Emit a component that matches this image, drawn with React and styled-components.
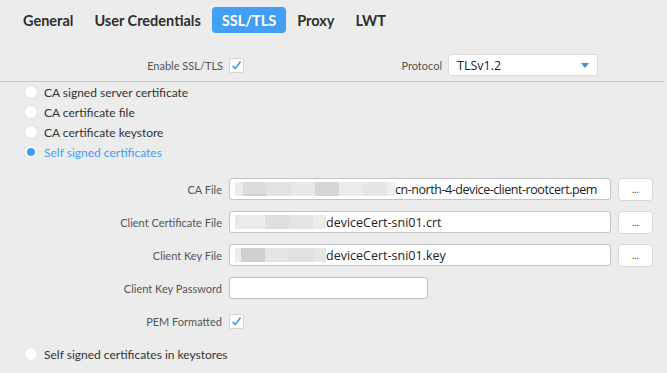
import React from 'react'
import styled, { createGlobalStyle } from 'styled-components'

const GlobalStyle = createGlobalStyle`
  html, body {
    margin: 0;
    padding: 0;
    background: #ececec;
    font-family: Lato, "Open Sans", sans-serif;
  }
`

const Page = styled.div`
  width: 667px;
  height: 373px;
  padding-top: 7px;
  box-sizing: border-box;
  overflow: hidden;
`

const TabBar = styled.div`
  display: flex;
  gap: 1px;
  padding-left: 13px;
  height: 26px;
`

const Tab = styled.div`
  display: flex;
  align-items: center;
  padding: 0 10px;
  border-radius: 4px;
  font-size: 14.5px;
  font-weight: bold;
  color: ${p => (p.active ? '#fff' : '#2e2e2e')};
  background: ${p => (p.active ? '#429ef6' : 'transparent')};
`

const TopRow = styled.div`
  display: grid;
  grid-template-columns: 223px 1fr auto 150px;
  column-gap: 6px;
  align-items: center;
  height: 22px;
  margin-top: 21px;
  padding-right: 69px;
`

const Label = styled.div`
  font-size: 11px;
  color: #555;
  text-align: right;
  white-space: nowrap;
`

const CheckBox = styled.div`
  width: 13px;
  height: 13px;
  background: #fff;
  border: 1px solid #d6d6d6;
  border-radius: 2px;
  display: flex;
  align-items: center;
  justify-content: center;
`

const Select = styled.div`
  height: 22px;
  box-sizing: border-box;
  background: #fff;
  border: 1px solid #dcdcdc;
  border-radius: 3px;
  display: flex;
  align-items: center;
  justify-content: space-between;
  padding: 0 8px 0 8px;
  font-size: 12.5px;
  color: #222;
  font-family: "Open Sans", sans-serif;
`

const Caret = styled.div`
  width: 0;
  height: 0;
  border-left: 4px solid transparent;
  border-right: 4px solid transparent;
  border-top: 5px solid #3d92e0;
`

const Separator = styled.div`
  width: 664px;
  height: 1px;
  background: #c9c9c9;
  margin-top: 5px;
`

const RadioRow = styled.div`
  display: flex;
  align-items: center;
  gap: 7px;
  height: 20px;
  padding-left: 25px;
  margin-top: ${p => p.mt || 0}px;
  font-size: 12px;
  color: ${p => (p.checked ? '#3f9cf3' : '#333')};
`

const RadioDot = styled.div`
  width: 12px;
  height: 12px;
  border-radius: 50%;
  background: #fff;
  box-shadow: 0 0 0 1px #e2e2e2;
  display: flex;
  align-items: center;
  justify-content: center;
  &::after {
    content: '';
    display: ${p => (p.checked ? 'block' : 'none')};
    width: 8px;
    height: 8px;
    border-radius: 50%;
    background: #3f9cf3;
  }
`

const Form = styled.div`
  display: grid;
  grid-template-columns: 222px auto;
  column-gap: 7px;
  row-gap: 11px;
  align-items: center;
  margin-top: 16px;
`

const FieldRow = styled.div`
  display: flex;
  align-items: center;
  gap: 7px;
  height: 22px;
`

const Input = styled.div`
  width: ${p => p.w}px;
  height: 22px;
  box-sizing: border-box;
  background: #fff;
  border: 1px solid #c4c4c4;
  border-radius: 3px;
  display: flex;
  align-items: center;
  padding-left: 5px;
  font-size: 12.5px;
  color: #222;
  font-family: "Open Sans", sans-serif;
  white-space: nowrap;
  overflow: hidden;
`

const FileName = styled.span`
  letter-spacing: ${p => p.spacing || 0}px;
`

const Redacted = styled.div`
  display: flex;
  height: 14px;
  flex-shrink: 0;
`

const Block = styled.div`
  height: 100%;
  width: ${p => p.w}px;
  background: ${p => p.c};
  box-shadow: ${p => (p.under ? `inset 0 -2px 0 ${p.under}` : 'none')};
`

const BrowseButton = styled.div`
  width: 35px;
  height: 23px;
  box-sizing: border-box;
  background: #fff;
  border: 1px solid #d8d8d8;
  border-radius: 4px;
  display: flex;
  align-items: flex-end;
  justify-content: center;
  padding-bottom: 5px;
  font-size: 10px;
  color: #444;
`

const Check = () => (
  <svg width="11" height="11" viewBox="0 0 11 11">
    <path d="M1.5 5.8 L4.2 8.6 L9.6 1.6" fill="none" stroke="#3f9cf3" strokeWidth="1.6" />
  </svg>
)

const caBlocks = [
  { w: 8, c: '#ececec' }, { w: 23, c: '#dcdcdc', under: '#cbcbcb' }, { w: 25, c: '#e2e2e2' },
  { w: 24, c: '#e8e8e8' }, { w: 24, c: '#d6d6d6' }, { w: 24, c: '#ebebeb' },
  { w: 24, c: '#e6e6e6' }, { w: 8, c: '#efefef' }
]
const certBlocks = [
  { w: 6, c: '#e8e8e8' }, { w: 24, c: '#ececec' }, { w: 24, c: '#dedede' },
  { w: 24, c: '#e4e4e4' }, { w: 13, c: '#ececec' }
]
const keyBlocks = [
  { w: 6, c: '#ececec' }, { w: 24, c: '#cfcfcf' }, { w: 24, c: '#e4e4e4' },
  { w: 24, c: '#e0e0e0' }, { w: 13, c: '#e6e6e6' }
]

const FileInput = ({ blocks, name, spacing }) => (
  <FieldRow>
    <Input w={382}>
      <Redacted>
        {blocks.map((b, i) => <Block key={i} {...b} />)}
      </Redacted>
      <FileName spacing={spacing}>{name}</FileName>
    </Input>
    <BrowseButton>...</BrowseButton>
  </FieldRow>
)

const tabs = ['General', 'User Credentials', 'SSL/TLS', 'Proxy', 'LWT']
const radios = ['CA signed server certificate', 'CA certificate file', 'CA certificate keystore', 'Self signed certificates']

export default function App() {
  return (
    <Page>
      <GlobalStyle />
      <TabBar>
        {tabs.map(t => <Tab key={t} active={t === 'SSL/TLS'}>{t}</Tab>)}
      </TabBar>
      <TopRow>
        <Label>Enable SSL/TLS</Label>
        <CheckBox><Check /></CheckBox>
        <Label>Protocol</Label>
        <Select>TLSv1.2<Caret /></Select>
      </TopRow>
      <Separator />
      {radios.map((r, i) => (
        <RadioRow key={r} checked={i === 3}>
          <RadioDot checked={i === 3} />
          {r}
        </RadioRow>
      ))}
      <Form>
        <Label>CA File</Label>
        <FileInput blocks={caBlocks} spacing={-0.45} name="cn-north-4-device-client-rootcert.pem" />
        <Label>Client Certificate File</Label>
        <FileInput blocks={certBlocks} name="deviceCert-sni01.crt" />
        <Label>Client Key File</Label>
        <FileInput blocks={keyBlocks} name="deviceCert-sni01.key" />
        <Label>Client Key Password</Label>
        <FieldRow><Input w={199} /></FieldRow>
        <Label>PEM Formatted</Label>
        <FieldRow><CheckBox><Check /></CheckBox></FieldRow>
      </Form>
      <RadioRow mt={12}>
        <RadioDot />
        Self signed certificates in keystores
      </RadioRow>
    </Page>
  )
}
